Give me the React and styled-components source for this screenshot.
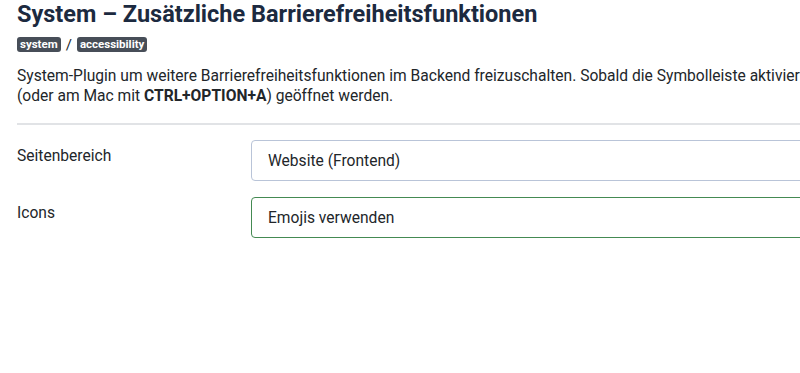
import React from "react";
import styled, { createGlobalStyle } from "styled-components";

const GlobalStyle = createGlobalStyle`
  html, body {
    margin: 0;
    padding: 0;
    background: #fff;
    overflow: hidden;
  }
  body {
    font-family: Roboto, "Liberation Sans", sans-serif;
    color: #22262a;
  }
`;

const borders = {
  default: "#b9c4d8",
  success: "#448a52",
};

export default function App() {
  return (
    <>
      <GlobalStyle />
      <Container>
        <header>
          <h1>System – Zusätzliche Barrierefreiheitsfunktionen</h1>
          <div className="badges">
            <Badge>system</Badge>
            <span className="sep">/</span>
            <Badge>accessibility</Badge>
          </div>
          <p className="description">
            System-Plugin um weitere Barrierefreiheitsfunktionen im Backend
            freizuschalten. Sobald die Symbolleiste aktiviert ist, kann sie mit{" "}
            <strong>CTRL+ALT+A</strong>
            <br />
            (oder am Mac mit <strong>CTRL+OPTION+A</strong>) geöffnet werden.
          </p>
        </header>

        <Divider />

        <Form>
          <Row>
            <Label htmlFor="section">Seitenbereich</Label>
            <Field $tone="default">Website (Frontend)</Field>
          </Row>
          <Row>
            <Label htmlFor="icons">Icons</Label>
            <Field $tone="success">Emojis verwenden</Field>
          </Row>
        </Form>
      </Container>
    </>
  );
}

const Container = styled.div`
  width: 1200px;
  padding: 1px 0 0 17px;

  header {
    h1 {
      margin: 0;
      font-size: 23.5px;
      line-height: 26px;
      font-weight: 700;
      color: #1c2a40;
    }

    .badges {
      display: flex;
      align-items: center;
      gap: 5px;
      margin-top: 10px;
      height: 15px;

      .sep {
        font-size: 15px;
        color: #22262a;
      }
    }

    .description {
      margin: 14px 0 0;
      font-size: 15.6px;
      line-height: 20px;
      white-space: nowrap;

      strong {
        font-weight: 700;
      }
    }
  }
`;

const Badge = styled.span`
  display: inline-block;
  background: #474e58;
  color: #fff;
  font-size: 11.5px;
  font-weight: 700;
  line-height: 15px;
  padding: 0 3px;
  border-radius: 3px;
`;

const Divider = styled.hr`
  margin: 17px 0 0;
  border: 0;
  border-top: 2px solid #e1e3e6;
`;

const Form = styled.div`
  display: flex;
  flex-direction: column;
  gap: 16px;
  margin-top: 15px;
`;

const Row = styled.div`
  display: grid;
  grid-template-columns: 234px 1fr;
  align-items: start;
`;

const Label = styled.label`
  padding-top: 6px;
  font-size: 15.6px;
  line-height: 20px;
  color: #22262a;
`;

const Field = styled.div`
  display: flex;
  align-items: center;
  height: 41px;
  box-sizing: border-box;
  padding: 0 16px;
  font-size: 15.6px;
  color: #22262a;
  background: #fff;
  border: 1px solid ${(p) => borders[p.$tone] || borders.default};
  border-radius: 4px;
`;
